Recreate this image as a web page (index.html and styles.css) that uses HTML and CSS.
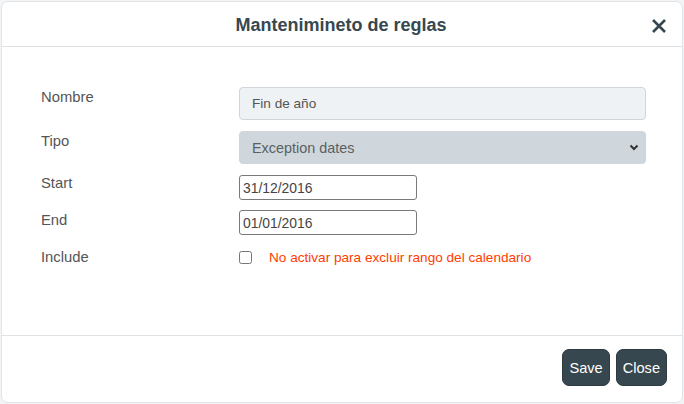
FILE: index.html
```html
<!DOCTYPE html>
<html lang="es">
<head>
<meta charset="utf-8">
<title>Mantenimineto de reglas</title>
<link rel="stylesheet" href="styles.css">
</head>
<body>
<div class="modal">
  <div class="modal-header">
    <h1 class="modal-title">Mantenimineto de reglas</h1>
    <button class="close-x" aria-label="Cerrar">
      <svg width="16" height="16" viewBox="0 0 16 16"><path d="M2 2 L14 14 M14 2 L2 14" stroke="#37474f" stroke-width="2.6" stroke-linecap="butt" fill="none"/></svg>
    </button>
  </div>
  <div class="modal-body">
    <div class="row">
      <label class="lbl">Nombre</label>
      <input class="ctl ctl-ro" type="text" value="Fin de año" readonly>
    </div>
    <div class="row">
      <label class="lbl">Tipo</label>
      <div class="sel-wrap">
        <select class="ctl ctl-sel" disabled><option>Exception dates</option></select>
        <svg class="chev" width="10" height="7" viewBox="0 0 10 7"><path d="M1.5 1.5 L5 5 L8.5 1.5" stroke="#333" stroke-width="2" fill="none"/></svg>
      </div>
    </div>
    <div class="row">
      <label class="lbl">Start</label>
      <input class="date" type="text" value="31/12/2016">
    </div>
    <div class="row">
      <label class="lbl">End</label>
      <input class="date" type="text" value="01/01/2016">
    </div>
    <div class="row row-check">
      <label class="lbl">Include</label>
      <div class="check-line">
        <input class="chk" type="checkbox">
        <span class="warn">No activar para excluir rango del calendario</span>
      </div>
    </div>
  </div>
  <div class="modal-footer">
    <button class="btn">Save</button>
    <button class="btn">Close</button>
  </div>
</div>
</body>
</html>
```

FILE: styles.css
```css
* { box-sizing: border-box; }
html, body { margin: 0; padding: 0; }
body {
  background: #f3f4f5;
  padding: 1px;
  font-family: "Liberation Sans", Arial, sans-serif;
  width: 684px;
  height: 404px;
}
.modal {
  width: 682px;
  height: 402px;
  background: #fff;
  border: 1px solid #e2e5e7;
  border-radius: 7px;
  display: flex;
  flex-direction: column;
}
.modal-header {
  height: 45px;
  border-bottom: 1px solid #dfe3e6;
  display: flex;
  align-items: center;
  justify-content: center;
  position: relative;
}
.modal-title {
  margin: 0;
  font-size: 18px;
  font-weight: bold;
  color: #37474f;
  padding-top: 2px;
  padding-right: 2px;
}
.close-x {
  position: absolute;
  right: 15px;
  top: 16px;
  border: 0;
  background: none;
  padding: 0;
  width: 16px;
  height: 16px;
  display: flex;
}
.modal-body {
  flex: 1;
  padding: 40px 35px 0 39px;
  display: flex;
  flex-direction: column;
  gap: 11px;
}
.row {
  display: grid;
  grid-template-columns: 198px 1fr;
  align-items: start;
}
.lbl {
  font-size: 14.8px;
  line-height: 20px;
  color: #555;
  margin-top: 0;
}
.ctl {
  width: 407px;
  height: 33px;
  border: 1px solid #cfd5da;
  border-radius: 4px;
  font-family: "Liberation Sans", Arial, sans-serif;
  font-size: 13.6px;
  color: #555;
  padding: 0 12px;
  outline: none;
}
.ctl-ro { background: #eff2f4; }
.sel-wrap { position: relative; width: 407px; }
.ctl-sel {
  appearance: none;
  -webkit-appearance: none;
  background: #cfd6dc;
  padding-left: 12px;
  font-size: 14.4px;
  color: #5a5f63;
  opacity: 1;
}
.chev { position: absolute; right: 7px; top: 13px; }
.date {
  width: 178px;
  height: 25px;
  border: 1px solid #7a7a7a;
  border-radius: 3px;
  font-family: "Liberation Sans", Arial, sans-serif;
  font-size: 13.9px;
  color: #444;
  padding: 0 3px;
  outline: none;
}
.row:nth-child(3) .lbl { margin-top: -2px; }
.row:nth-child(4) { margin-top: -1px; }
.row:nth-child(4) .lbl { margin-top: 0; }
.row-check { margin-top: 1px; }
.check-line {
  display: flex;
  align-items: center;
  height: 20px;
  margin-top: 0;
}
.chk {
  margin: 0;
  width: 13px;
  height: 13px;
}
.warn {
  margin-left: 17px;
  font-size: 13.6px;
  color: #ff3d00;
}
.modal-footer {
  height: 67px;
  border-top: 1px solid #dfe3e6;
  display: flex;
  justify-content: flex-end;
  gap: 6px;
  padding: 13px 15px 0 0;
}
.btn {
  height: 37px;
  padding: 0 6px;
  background: #37474f;
  color: #fff;
  border: 1px solid #2d3a40;
  border-radius: 7px;
  font-family: "Liberation Sans", Arial, sans-serif;
  font-size: 14.6px;
}
```
